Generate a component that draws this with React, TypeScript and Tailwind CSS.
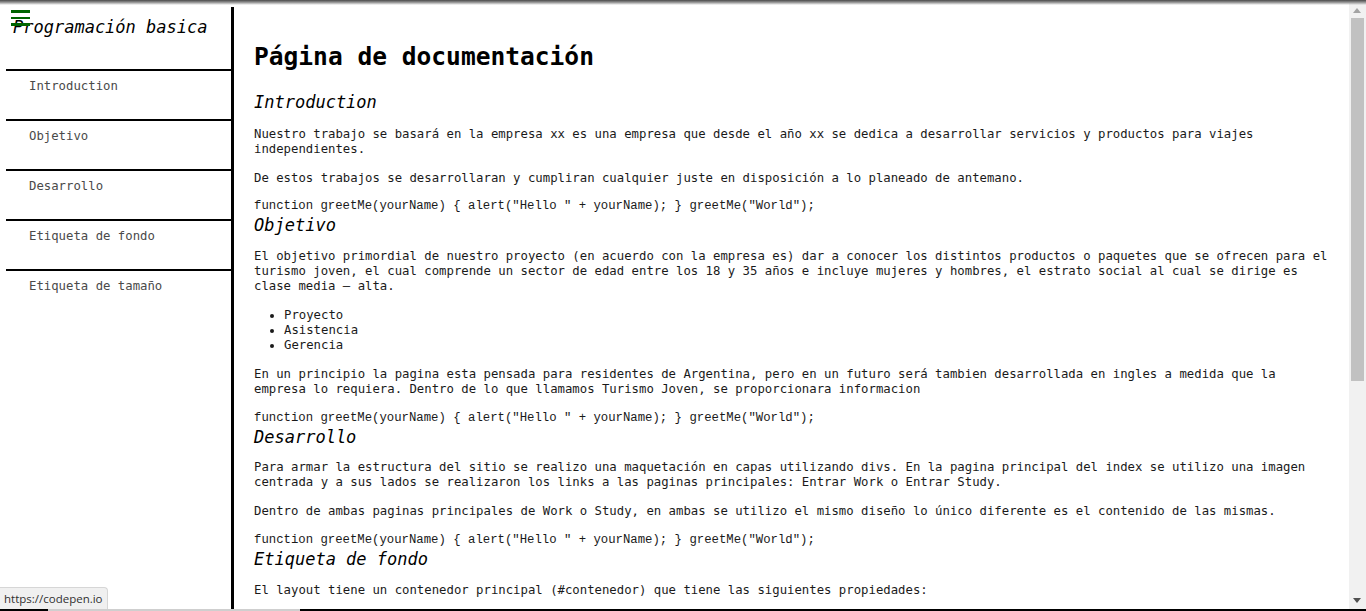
import React from "react";

const mono = { fontFamily: '"DejaVu Sans Mono", "Liberation Mono", monospace' };

const Code = ({ mt = "mt-[13px]" }: { mt?: string }) => (
  <code className={"block leading-[15px] " + mt}>
    {'function greetMe(yourName) { alert("Hello " + yourName); } greetMe("World");'}
  </code>
);

const H = ({ children }: { children: React.ReactNode }) => (
  <header className="mt-px text-[17px] leading-[20px] italic text-black">{children}</header>
);

export default function App() {
  const nav = ["Introduction", "Objetivo", "Desarrollo", "Etiqueta de fondo", "Etiqueta de tamaño"];
  return (
    <div className="relative flex h-[611px] w-[1366px] overflow-hidden bg-white text-[12.31px] text-[#1a1a1a]" style={mono}>
      {/* sidebar */}
      <nav className="mt-[7px] w-[234px] shrink-0 border-r-[3px] border-black">
        <header className="mt-[10px] pl-[13px] text-[17px] leading-[20px] italic text-black">Programación basica</header>
        <ul className="ml-[6px] mt-[32px]">
          {nav.map((n) => (
            <li key={n} className="h-[50px] border-t-2 border-black pl-[23px] pt-[8px] leading-[15px] text-[#4a4a4a]">
              {n}
            </li>
          ))}
        </ul>
      </nav>

      {/* main */}
      <main className="w-[1115px] shrink-0 pl-[20px] pt-[42px]">
        <div className="w-[1080px]">
          <h1 className="text-[24.55px] font-bold leading-[29px] text-black">Página de documentación</h1>

          <section>
            <header className="mt-[21px] text-[17px] leading-[20px] italic text-black">Introduction</header>
            <p className="mt-[15px] leading-[15px]">
              Nuestro trabajo se basará en la empresa xx es una empresa que desde el año xx se dedica a desarrollar servicios y productos para viajes independientes.
            </p>
            <p className="mt-[14px] leading-[15px]">
              De estos trabajos se desarrollaran y cumpliran cualquier juste en disposición a lo planeado de antemano.
            </p>
            <Code />
          </section>

          <section>
            <H>Objetivo</H>
            <p className="mt-[14px] leading-[15px]">
              El objetivo primordial de nuestro proyecto (en acuerdo con la empresa es) dar a conocer los distintos productos o paquetes que se ofrecen para el turismo joven, el cual comprende un sector de edad entre los 18 y 35 años e incluye mujeres y hombres, el estrato social al cual se dirige es clase media – alta.
            </p>
            <ul className="mt-[14px] list-disc pl-[30px] leading-[15px]">
              <li>Proyecto</li>
              <li>Asistencia</li>
              <li>Gerencia</li>
            </ul>
            <p className="mt-[14px] leading-[15px]">
              En un principio la pagina esta pensada para residentes de Argentina, pero en un futuro será tambien desarrollada en ingles a medida que la empresa lo requiera. Dentro de lo que llamamos Turismo Joven, se proporcionara informacion
            </p>
            <Code mt="mt-[14px]" />
          </section>

          <section>
            <H>Desarrollo</H>
            <p className="mt-[13px] leading-[15px]">
              Para armar la estructura del sitio se realizo una maquetación en capas utilizando divs. En la pagina principal del index se utilizo una imagen centrada y a sus lados se realizaron los links a las paginas principales: Entrar Work o Entrar Study.
            </p>
            <p className="mt-[14px] leading-[15px]">
              Dentro de ambas paginas principales de Work o Study, en ambas se utilizo el mismo diseño lo único diferente es el contenido de las mismas.
            </p>
            <Code mt="mt-[14px]" />
          </section>

          <section>
            <H>Etiqueta de fondo</H>
            <p className="mt-[14px] leading-[15px]">
              El layout tiene un contenedor principal (#contenedor) que tiene las siguientes propiedades:
            </p>
          </section>
        </div>
      </main>

      {/* scrollbar */}
      <div className="relative w-[17px] shrink-0 bg-[#f1f1f1]">
        <div className="absolute left-[4px] top-[8px] h-0 w-0 border-x-[4.5px] border-b-[5px] border-x-transparent border-b-[#a3a3a3]" />
        <div className="absolute left-[2px] top-[18px] h-[363px] w-[13px] bg-[#c1c1c1]" />
        <div className="absolute bottom-[8px] left-[4px] h-0 w-0 border-x-[4.5px] border-t-[5px] border-x-transparent border-t-[#505050]" />
      </div>

      {/* hamburger */}
      <div className="absolute left-[11px] top-[10px] flex w-[19px] flex-col gap-[4px]">
        <span className="block h-[2.5px] bg-[#006400]" />
        <span className="block h-[2.5px] bg-[#006400]" />
        <span className="block h-[2.5px] bg-[#006400]" />
      </div>

      {/* top shadow */}
      <div className="pointer-events-none absolute left-0 right-0 top-0 h-[5px] bg-gradient-to-b from-[#4a4a4a] via-[#9a9a9a] to-transparent" />

      {/* bottom edge */}
      <div className="absolute bottom-0 left-0 right-0 flex h-[2px]">
        <div className="w-[48px] bg-black" />
        <div className="w-[252px] bg-[#cfcfcf]" />
        <div className="flex-1 bg-black" />
      </div>

      {/* status bubble */}
      <div
        className="absolute bottom-[2px] left-0 rounded-tr-[4px] border-r border-t border-[#d6d6d6] bg-[#f0f0f0] px-[4px] text-[11.5px] leading-[21px] text-[#303030]"
        style={{ fontFamily: '"Open Sans", "Noto Sans", sans-serif' }}
      >
        https://codepen.io
      </div>
    </div>
  );
}
